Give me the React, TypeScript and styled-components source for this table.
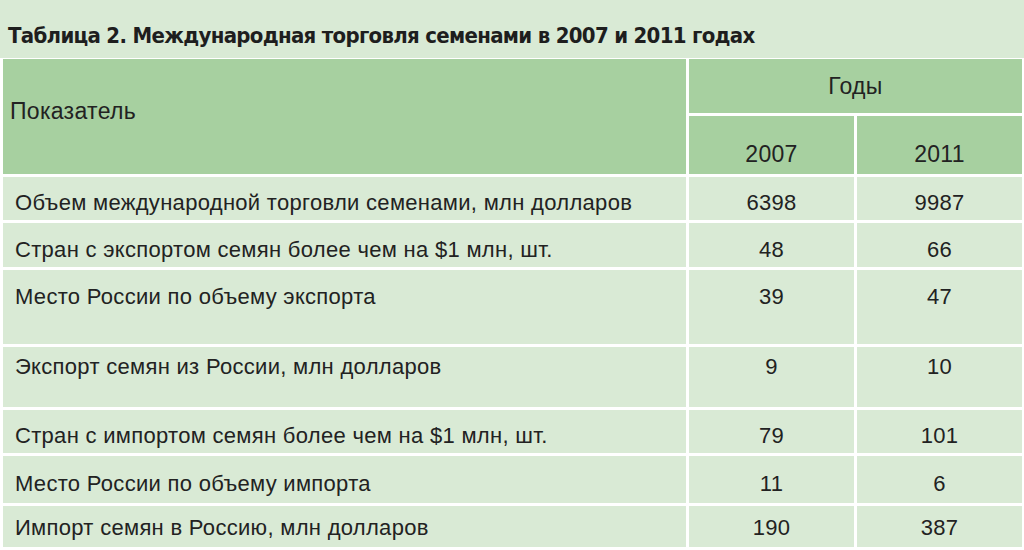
import React from "react";
import styled, { createGlobalStyle } from "styled-components";

const GlobalStyle = createGlobalStyle`
  html, body {
    margin: 0;
    padding: 0;
    background: #ffffff;
  }
  body {
    font-family: "Liberation Sans", Arial, sans-serif;
    color: #222222;
  }
`;

const Page = styled.div`
  width: 1024px;
  height: 550px;
  overflow: hidden;
  background: #ffffff;
`;

const TitleBand = styled.div`
  height: 58px;
  margin-bottom: 1px;
  background: #d9ead5;
  display: flex;
  align-items: flex-end;
  padding: 0 0 10px 8px;
  box-sizing: border-box;
`;

const Title = styled.h1`
  margin: 0;
  font-family: "Liberation Sans Narrow", "DejaVu Sans Condensed", "Liberation Sans", sans-serif;
  font-stretch: condensed;
  font-weight: 700;
  font-size: 22px;
  line-height: 24px;
  letter-spacing: -0.7px;
  color: #1e1e1e;
`;

const Grid = styled.div`
  display: grid;
  grid-template-columns: 683px 165px 165px;
  grid-template-rows: 54px 58px 43px 44px 74px 60px 43px 47px 41px;
  gap: 3px;
  padding-left: 3px;
`;

const HeadCell = styled.div<{ $col?: string; $row?: string; $align: string; $justify: string; $pad?: string }>`
  background: #a7d0a0;
  grid-column: ${(p) => p.$col ?? "auto"};
  grid-row: ${(p) => p.$row ?? "auto"};
  display: flex;
  align-items: ${(p) => p.$align};
  justify-content: ${(p) => p.$justify};
  padding: ${(p) => p.$pad ?? "0"};
  box-sizing: border-box;
  font-size: 23px;
  line-height: 26px;
  letter-spacing: 0.3px;
`;

const BodyCell = styled.div<{ $num?: boolean; $top: number }>`
  background: #d9ead5;
  display: flex;
  align-items: flex-start;
  justify-content: ${(p) => (p.$num ? "center" : "flex-start")};
  padding: ${(p) => p.$top}px 0 0 ${(p) => (p.$num ? 0 : 12)}px;
  box-sizing: border-box;
  font-size: 22px;
  line-height: 24px;
  letter-spacing: 0.3px;
`;

const rows: { label: string; a: string; b: string; top: number }[] = [
  { label: "Объем международной торговли семенами, млн долларов", a: "6398", b: "9987", top: 14 },
  { label: "Стран с экспортом семян более чем на $1 млн, шт.", a: "48", b: "66", top: 15 },
  { label: "Место России по объему экспорта", a: "39", b: "47", top: 15 },
  { label: "Экспорт семян из России, млн долларов", a: "9", b: "10", top: 8 },
  { label: "Стран с импортом семян более чем на $1 млн, шт.", a: "79", b: "101", top: 14 },
  { label: "Место России по объему импорта", a: "11", b: "6", top: 16 },
  { label: "Импорт семян в Россию, млн долларов", a: "190", b: "387", top: 10 },
];

export default function App() {
  return (
    <Page>
      <GlobalStyle />
      <TitleBand>
        <Title>Таблица 2. Международная торговля семенами в 2007 и 2011 годах</Title>
      </TitleBand>
      <Grid>
        <HeadCell $col="1" $row="1 / span 2" $align="center" $justify="flex-start" $pad="0 0 12px 7px">
          Показатель
        </HeadCell>
        <HeadCell $col="2 / span 2" $row="1" $align="center" $justify="center">
          Годы
        </HeadCell>
        <HeadCell $col="2" $row="2" $align="flex-end" $justify="center" $pad="0 0 7px 0">
          2007
        </HeadCell>
        <HeadCell $col="3" $row="2" $align="flex-end" $justify="center" $pad="0 0 7px 0">
          2011
        </HeadCell>
        {rows.map((r) => (
          <React.Fragment key={r.label}>
            <BodyCell $top={r.top}>{r.label}</BodyCell>
            <BodyCell $num $top={r.top}>{r.a}</BodyCell>
            <BodyCell $num $top={r.top}>{r.b}</BodyCell>
          </React.Fragment>
        ))}
      </Grid>
    </Page>
  );
}
